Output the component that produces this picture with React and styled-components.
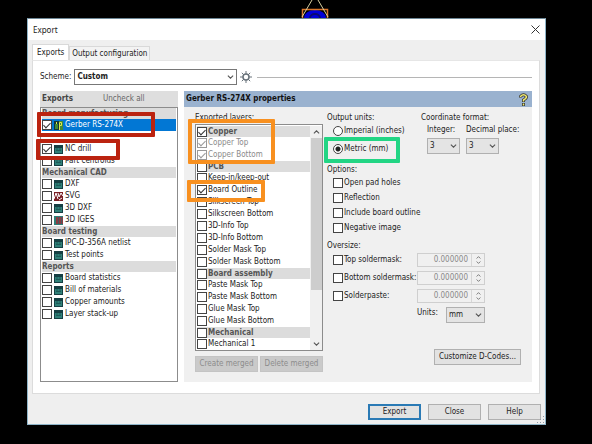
import { useState } from "react";
import styled, { createGlobalStyle, css } from "styled-components";

const GlobalStyle = createGlobalStyle`
  * {
    box-sizing: border-box;
  }

  body {
    margin: 0;
    background: #000;
    color: #222;
    font: 8px/12px "DejaVu Sans Condensed", "DejaVu Sans", Tahoma, sans-serif;
  }

  button, input, select {
    margin: 0;
    font: inherit;
    color: inherit;
  }
`;

const Page = styled.div`
  min-height: 100vh;
  padding: 0 46px 19px 27px;
`;

const Board = styled.div`
  display: flex;
  justify-content: center;
  height: 18px;
  padding-left: 57px;
`;

const Dialog = styled.div`
  background: #efefef;
  border: 1px solid #8fb5c9;
  border-top-color: #6d8796;
`;

const TitleBar = styled.div`
  display: flex;
  justify-content: space-between;
  align-items: center;
  height: 21px;
  padding: 0 5px;
  background: #fff;
`;

const Title = styled.h1`
  margin: 0;
  font: 400 8px/12px "Noto Sans", "Open Sans", sans-serif;
`;

const CloseIcon = styled.button`
  display: flex;
  padding: 1px 0;
  border: 0;
  background: none;
`;

const Tabs = styled.div`
  display: flex;
  align-items: flex-end;
  height: 20px;
  padding-left: 4px;
`;

const Tab = styled.button`
  height: ${(p) => (p.$active ? 16 : 14)}px;
  padding: 0 ${(p) => (p.$active ? 4 : 2)}px;
  border: 1px solid #d9d9d9;
  border-bottom: 0;
  background: ${(p) => (p.$active ? "#fff" : "#f3f3f3")};
`;

const Panel = styled.div`
  margin: 0 5px 0 4px;
  padding: 8px 7px 11px;
  background: #fff;
  border: 1px solid #dcdcdc;
  border-top-color: #e6e6e6;
`;

const SchemeRow = styled.div`
  display: flex;
  align-items: center;
  gap: 3px;
  margin-bottom: 6px;
`;

const Rule = styled.hr`
  flex: 1;
  margin: 0 0 0 2px;
  border: 0;
  border-top: 1px solid #b5b5b5;
`;

const SelectBox = styled.div`
  display: grid;
  align-items: center;
  width: ${(p) => p.$width}px;

  select, svg {
    grid-area: 1 / 1;
  }

  select {
    appearance: none;
    width: 100%;
    height: 16px;
    padding: 0 2px;
    border: 1px solid ${(p) => (p.$strong ? "#777" : "#b0b0b0")};
    border-radius: 0;
    background: ${(p) => (p.$strong ? "#fff" : "#e4e4e4")};
    font-weight: ${(p) => (p.$strong ? 700 : 400)};
  }

  svg {
    justify-self: end;
    margin-right: 3px;
    pointer-events: none;
  }
`;

const Columns = styled.div`
  display: grid;
  grid-template-columns: 138px 1fr;
  gap: 6px;
`;

const Column = styled.section`
  display: flex;
  flex-direction: column;
`;

const Header = styled.header`
  display: flex;
  align-items: center;
  height: 16px;
  padding: 0 4px 0 2px;
  background: ${(p) => (p.$blue ? "#9ab2cf" : "#dedede")};
  color: ${(p) => (p.$blue ? "#111" : "#444")};
  justify-content: ${(p) => (p.$blue ? "space-between" : "flex-start")};
  gap: 30px;

  h2 {
    margin: 0;
    font-size: 8px;
    font-weight: 700;
  }

  button {
    display: flex;
    padding: 0;
    border: 0;
    background: none;
    color: #666;
  }
`;

const List = styled.div`
  flex: 1;
  padding: 0 1px;
  background: #fff;
  border: 1px solid #8c8c8c;
`;

const Row = styled.div`
  position: relative;
  display: flex;
  align-items: center;
  height: 12px;
  white-space: nowrap;

  label {
    display: flex;
    align-items: center;
    gap: 1px;
  }

  ${(p) =>
    p.$heading &&
    css`
      height: 11px;
      background: #dcdcdc;
      color: #555;
      font-weight: 700;
    `}

  ${(p) =>
    p.$selected &&
    css`
      background: #0277d4;
      color: #fff;
    `}

  ${(p) =>
    p.$muted &&
    css`
      color: #8a8a8a;
    `}
`;

const Check = styled.input`
  appearance: none;
  flex: none;
  width: 10px;
  height: 10px;
  border: 1px solid #444;
  border-radius: ${(p) => (p.type === "radio" ? "50%" : "0")};
  background: #fff;

  &[type="checkbox"]:checked::after {
    content: "";
    display: block;
    width: 3px;
    height: 6px;
    margin: 0 auto;
    border: solid #333;
    border-width: 0 1px 1px 0;
    transform: rotate(45deg);
  }

  &[type="radio"]:checked {
    background: radial-gradient(circle, #222 0 2px, #fff 3px);
  }

  &:disabled {
    border-color: #999;
  }

  &:disabled::after {
    border-color: #999 !important;
  }
`;

const Highlight = styled.span`
  position: absolute;
  z-index: 1;
  inset: ${(p) => p.$inset};
  width: ${(p) => p.$width}px;
  height: ${(p) => p.$height}px;
  border: 4px solid ${(p) => p.$color};
  border-radius: 1px;
  pointer-events: none;
`;

const Properties = styled.div`
  display: grid;
  grid-template-columns: 128px 1fr;
  gap: 4px;
  padding: 5px 11px 10px;
  background: #f0f0f0;
`;

const LayerList = styled(List)`
  display: flex;
  padding: 1px 0 0 1px;
`;

const Layers = styled.div`
  flex: 1;
`;

const ScrollBar = styled.div`
  display: flex;
  flex-direction: column;
  align-items: center;
  width: 12px;
  padding: 4px 0;
  background: #f0f0f0;
`;

const Thumb = styled.div`
  flex: 1;
  width: 11px;
  margin: 4px 0 52px;
  background: #cdcdcd;
`;

const ButtonPair = styled.div`
  display: grid;
  grid-template-columns: 1fr 1fr;
  gap: 2px;
  margin-top: 5px;
`;

const Button = styled.button`
  height: 16px;
  min-width: ${(p) => p.$width || 0}px;
  padding: 0;
  border: ${(p) => (p.$primary ? "2px solid #2a7ab5" : "1px solid #b0b0b0")};
  background: #e2e2e2;
  white-space: nowrap;

  &:disabled {
    border-color: #c4c4c4;
    background: #cacaca;
    color: #8c8c8c;
  }
`;

const CustomizeButton = styled(Button)`
  align-self: flex-end;
  margin-top: 26px;
`;

const Settings = styled.div`
  display: flex;
  flex-direction: column;
`;

const TopSettings = styled.div`
  display: grid;
  grid-template-columns: 94px 1fr;
`;

const Group = styled.div`
  display: flex;
  flex-direction: column;
  margin-top: ${(p) => p.$top || 0}px;
`;

const Choices = styled.div`
  display: flex;
  flex-direction: column;
  gap: ${(p) => p.$gap}px;
  padding: 1px 0 0 6px;
`;

const Formats = styled.div`
  display: grid;
  grid-template-columns: 33px 1fr;
  gap: 2px 6px;
  padding-left: 6px;
  white-space: nowrap;
`;

const Oversize = styled.div`
  display: grid;
  grid-template-columns: 84px 68px;
  align-items: center;
  row-gap: 4px;
  padding: 1px 0 0 6px;
`;

const Spinner = styled.div`
  display: flex;
  height: 14px;
  border: 1px solid #cfcfcf;
  color: #888;

  input {
    flex: 1;
    min-width: 0;
    padding: 0 3px 0 0;
    border: 0;
    background: none;
    text-align: right;
  }
`;

const Steps = styled.div`
  display: flex;
  flex-direction: column;
  justify-content: center;
  gap: 2px;
  width: 13px;
  border-left: 1px solid #d6d6d6;

  button {
    display: flex;
    justify-content: center;
    padding: 0;
    border: 0;
    background: none;
  }
`;

const UnitsRow = styled.div`
  display: flex;
  justify-content: space-between;
  margin-top: 4px;
  width: 158px;
  padding-left: 90px;
`;

const Footer = styled.footer`
  display: flex;
  justify-content: flex-end;
  gap: 7px;
  padding: 10px 4px 4px;
`;

const Grip = styled.div`
  height: 0;
  display: flex;
  justify-content: flex-end;
  align-items: flex-end;
`;

const FormatIcon = styled.svg`
  flex: none;
  width: 9px;
  height: 9px;
  margin: 0 1px;
`;

function Chevron({ up, size = 7, color = "#555" }) {
  return (
    <svg width={size} height={Math.ceil(size / 2)} viewBox="0 0 8 4" fill="none" stroke={color} strokeWidth="1.2">
      <path d={up ? "M1 3.6 4 .6l3 3" : "M1 .4l3 3 3-3"} />
    </svg>
  );
}

function ItemIcon({ kind }) {
  if (kind === "gerber") {
    return (
      <FormatIcon viewBox="0 0 9 9">
        <path fill="#12383a" d="M0 0h5v9H0z" />
        <path fill="#3f8a3a" d="M1 3h3v5H1zM5 0h4v9H5z" />
        <path fill="none" stroke="#dfe84e" d="M5.500 9V1.500h2v3h-2M2.500 1v2" />
      </FormatIcon>
    );
  }
  if (kind === "svg") {
    return (
      <FormatIcon viewBox="0 0 9 9">
        <path fill="#7b1f24" d="M0 0h9v9H0z" />
        <path fill="none" stroke="#fff" d="M0 7 2 1l2 6M4 1l1 4 2-4 2 3M5 8l3-2" />
      </FormatIcon>
    );
  }
  if (kind === "iges") {
    return (
      <FormatIcon viewBox="0 0 9 9">
        <path fill="#2f7f78" d="M0 0h9v9H0z" />
        <path fill="#8b3b43" d="M2 1h7v7H2z" />
        <path stroke="#4a5a5c" d="M4.500 1v7M7.500 1v7" />
      </FormatIcon>
    );
  }
  return (
    <FormatIcon viewBox="0 0 9 9">
      <path fill="#163f43" d="M0 0h9v9H0z" />
      <path fill="#2f8078" d="M1 3h7v5H1z" />
      <path stroke="#1f5a58" d="M2 5.500h5M3 3v2M6 3v2" />
    </FormatIcon>
  );
}

const exportItems = [
  { heading: "Board manufacturing" },
  { name: "Gerber RS-274X", icon: "gerber", checked: true, selected: true, mark: ["-7px auto auto -5px", 118, 25] },
  {},
  { name: "NC drill", checked: true, mark: ["-4px auto auto -6px", 84, 21] },
  { name: "Part centroids" },
  { heading: "Mechanical CAD" },
  { name: "DXF" },
  { name: "SVG", icon: "svg" },
  { name: "3D DXF" },
  { name: "3D IGES", icon: "iges" },
  { heading: "Board testing" },
  { name: "IPC-D-356A netlist" },
  { name: "Test points" },
  { heading: "Reports" },
  { name: "Board statistics" },
  { name: "Bill of materials" },
  { name: "Copper amounts" },
  { name: "Layer stack-up" },
];

const layers = [
  { name: "Copper", heading: true, checked: true, mark: ["-7px auto auto -9px", 87, 45] },
  { name: "Copper Top", checked: true, muted: true },
  { name: "Copper Bottom", checked: true, muted: true },
  { name: "PCB", heading: true },
  { name: "Keep-in/keep-out" },
  { name: "Board Outline", checked: true, mark: ["-4px auto auto -10px", 78, 22] },
  { name: "Silkscreen Top" },
  { name: "Silkscreen Bottom" },
  { name: "3D-Info Top" },
  { name: "3D-Info Bottom" },
  { name: "Solder Mask Top" },
  { name: "Solder Mask Bottom" },
  { name: "Board assembly", heading: true },
  { name: "Paste Mask Top" },
  { name: "Paste Mask Bottom" },
  { name: "Glue Mask Top" },
  { name: "Glue Mask Bottom" },
  { name: "Mechanical", heading: true },
  { name: "Mechanical 1" },
];

function Mark({ mark, color }) {
  return <Highlight $inset={mark[0]} $width={mark[1]} $height={mark[2]} $color={color} />;
}

function Option({ label, ...rest }) {
  return (
    <Row>
      <label>
        <Check type="checkbox" {...rest} />
        {label}
      </label>
    </Row>
  );
}

function Picker({ id, width, strong, options }) {
  return (
    <SelectBox $width={width} $strong={strong}>
      <select id={id}>
        {options.map((o) => (
          <option key={o}>{o}</option>
        ))}
      </select>
      <Chevron />
    </SelectBox>
  );
}

function OversizeField({ label }) {
  const [value, setValue] = useState(0);
  return (
    <>
      <Option label={label} />
      <Spinner>
        <input type="text" aria-label={label} value={value.toFixed(6)} readOnly />
        <Steps>
          <button aria-label="Increase" onClick={() => setValue(value + 1)}>
            <Chevron up size={5} />
          </button>
          <button aria-label="Decrease" onClick={() => setValue(Math.max(0, value - 1))}>
            <Chevron size={5} />
          </button>
        </Steps>
      </Spinner>
    </>
  );
}

function App() {
  const [unit, setUnit] = useState("metric");

  return (
    <Page>
      <GlobalStyle />
      <Board>
        <svg width="28" height="18" viewBox="0 0 28 18" fill="none">
          <ellipse cx="14" cy="18" rx="11" ry="8" fill="#0000d8" />
          <path stroke="#0a0a70" strokeWidth="2" d="M9 18a5 4 0 0 1 10 0" />
          <path stroke="#d9762b" strokeWidth="1.500" d="M1.500 18V9.500h25V18" />
          <path stroke="#d8d0a0" d="M1 17 11 0M27 17 17 0" />
        </svg>
      </Board>
      <Dialog role="dialog" aria-label="Export">
        <TitleBar>
          <Title>Export</Title>
          <CloseIcon aria-label="Close window">
            <svg width="9" height="9" viewBox="0 0 9 9" stroke="#333">
              <path d="M.5.5l8 8M8.500.5l-8 8" />
            </svg>
          </CloseIcon>
        </TitleBar>
        <Tabs role="tablist">
          <Tab role="tab" aria-selected="true" $active>Exports</Tab>
          <Tab role="tab" aria-selected="false">Output configuration</Tab>
        </Tabs>
        <Panel>
          <SchemeRow>
            <label htmlFor="scheme">Scheme:</label>
            <Picker id="scheme" width={163} strong options={["Custom"]} />
            <svg width="12" height="12" viewBox="0 0 12 12" fill="none" stroke="#68727a">
              <circle cx="6" cy="6" r="3" strokeWidth="1.500" />
              <path d="M6 0v3M6 9v3M0 6h3M9 6h3M1.800 1.800l2 2M8.200 8.200l2 2M10.200 1.800l-2 2M3.800 8.200l-2 2" />
            </svg>
            <Rule />
          </SchemeRow>
          <Columns>
            <Column>
              <Header>
                <h2>Exports</h2>
                <button>Uncheck all</button>
              </Header>
              <List>
                {exportItems.map((item, i) => (
                  <Row key={i} $heading={!!item.heading} $selected={item.selected}>
                    {item.heading}
                    {item.name && (
                      <label>
                        <Check type="checkbox" defaultChecked={item.checked} />
                        <ItemIcon kind={item.icon} />
                        {item.name}
                      </label>
                    )}
                    {item.mark && <Mark mark={item.mark} color="#bb2310" />}
                  </Row>
                ))}
              </List>
            </Column>
            <Column>
              <Header $blue>
                <h2>Gerber RS-274X properties</h2>
                <button aria-label="Properties help">
                  <svg width="9" height="13" viewBox="0 0 9 13" fill="none">
                    <path stroke="#333" strokeWidth="3" d="M1.500 4.500V3.500q3-3.500 6 0 0 2-3 3.500v2M4.500 10v3" />
                    <path stroke="#f0ea70" strokeWidth="1.500" d="M1.500 4V3.500q3-3.500 6 0 0 2-3 3.500v1.500M4.500 10.500v2" />
                  </svg>
                </button>
              </Header>
              <Properties>
                <Column>
                  <div>Exported layers:</div>
                  <LayerList>
                    <Layers>
                      {layers.map((layer) => (
                        <Row key={layer.name} $heading={layer.heading} $muted={layer.muted}>
                          <label>
                            <Check type="checkbox" defaultChecked={layer.checked} disabled={layer.muted} />
                            {layer.name}
                          </label>
                          {layer.mark && <Mark mark={layer.mark} color="#f8901f" />}
                        </Row>
                      ))}
                    </Layers>
                    <ScrollBar>
                      <Chevron up />
                      <Thumb />
                      <Chevron />
                    </ScrollBar>
                  </LayerList>
                  <ButtonPair>
                    <Button disabled>Create merged</Button>
                    <Button disabled>Delete merged</Button>
                  </ButtonPair>
                </Column>
                <Settings>
                  <TopSettings>
                    <Group role="radiogroup" aria-label="Output units">
                      <div>Output units:</div>
                      <Choices $gap={6}>
                        <Row>
                          <label>
                            <Check type="radio" name="unit" checked={unit === "imperial"} onChange={() => setUnit("imperial")} />
                            Imperial (inches)
                          </label>
                        </Row>
                        <Row>
                          <label>
                            <Check type="radio" name="unit" checked={unit === "metric"} onChange={() => setUnit("metric")} />
                            Metric (mm)
                          </label>
                          <Mark mark={["-6px auto auto -9px", 76, 26]} color="#22d584" />
                        </Row>
                      </Choices>
                    </Group>
                    <Group role="group" aria-label="Coordinate format">
                      <div>Coordinate format:</div>
                      <Formats>
                        <label htmlFor="integer">Integer:</label>
                        <label htmlFor="decimal">Decimal place:</label>
                        <Picker id="integer" width={33} options={["3", "2", "4"]} />
                        <Picker id="decimal" width={33} options={["3", "4", "5"]} />
                      </Formats>
                    </Group>
                  </TopSettings>
                  <Group role="group" aria-label="Options" $top={9}>
                    <div>Options:</div>
                    <Choices $gap={3}>
                      <Option label="Open pad holes" />
                      <Option label="Reflection" />
                      <Option label="Include board outline" />
                      <Option label="Negative image" />
                    </Choices>
                  </Group>
                  <Group role="group" aria-label="Oversize" $top={6}>
                    <div>Oversize:</div>
                    <Oversize>
                      <OversizeField label="Top soldermask:" />
                      <OversizeField label="Bottom soldermask:" />
                      <OversizeField label="Solderpaste:" />
                    </Oversize>
                    <UnitsRow>
                      <label htmlFor="units">Units:</label>
                      <Picker id="units" width={39} options={["mm", "inch"]} />
                    </UnitsRow>
                  </Group>
                  <CustomizeButton $width={87}>Customize D-Codes...</CustomizeButton>
                </Settings>
              </Properties>
            </Column>
          </Columns>
        </Panel>
        <Footer>
          <Button $width={53} $primary>Export</Button>
          <Button $width={53}>Close</Button>
          <Button $width={53}>Help</Button>
        </Footer>
        <Grip>
          <svg width="8" height="8" viewBox="0 0 8 8" fill="#8d9aa6">
            <path d="M6 0h1v1H6zM6 3h1v1H6zM3 3h1v1H3zM6 6h1v1H6zM3 6h1v1H3zM0 6h1v1H0z" />
          </svg>
        </Grip>
      </Dialog>
    </Page>
  );
}

export default App;
